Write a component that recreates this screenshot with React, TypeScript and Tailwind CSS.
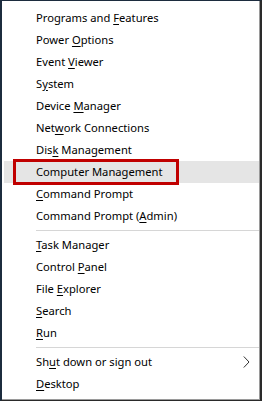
import React from "react";

type Item = { pre: string; key?: string; post?: string; selected?: boolean; arrow?: boolean };

const groups: Item[][] = [
  [
    { pre: "Programs and ", key: "F", post: "eatures" },
    { pre: "Power ", key: "O", post: "ptions" },
    { pre: "Event ", key: "V", post: "iewer" },
    { pre: "S", key: "y", post: "stem" },
    { pre: "Device ", key: "M", post: "anager" },
    { pre: "Net", key: "w", post: "ork Connections" },
    { pre: "Dis", key: "k", post: " Management" },
    { pre: "Computer Management", selected: true },
    { pre: "", key: "C", post: "ommand Prompt" },
    { pre: "Command Prompt (", key: "A", post: "dmin)" },
  ],
  [
    { pre: "", key: "T", post: "ask Manager" },
    { pre: "Control ", key: "P", post: "anel" },
    { pre: "File ", key: "E", post: "xplorer" },
    { pre: "", key: "S", post: "earch" },
    { pre: "", key: "R", post: "un" },
  ],
  [
    { pre: "Sh", key: "u", post: "t down or sign out", arrow: true },
    { pre: "", key: "D", post: "esktop" },
  ],
];

function Row({ item }: { item: Item }) {
  return (
    <div
      className={`relative flex items-center h-[22px] pl-[32px] pr-[9px] ${
        item.selected ? "bg-[#e5e5e5]" : ""
      }`}
    >
      {item.selected && (
        <div className="absolute left-[9px] top-[-2px] w-[166px] h-[26px] border-[3px] border-[#c00000]" />
      )}
      <span className="flex-1 whitespace-nowrap">
        {item.pre}
        {item.key && <span className="underline underline-offset-2">{item.key}</span>}
        {item.post}
      </span>
      {item.arrow && (
        <svg width="7" height="12" viewBox="0 0 7 12">
          <path d="M0.8 0.5 L6 6 L0.8 11.5" fill="none" stroke="#333" strokeWidth="1" />
        </svg>
      )}
    </div>
  );
}

export default function App() {
  return (
    <div
      className="w-[262px] h-[401px] border-l-2 border-t border-r-2 border-b border-l-[#1c2c3e] border-t-[#1c2c3e] border-r-[#2a2a2a] border-b-[#2a2a2a] text-[11.2px] text-black"
      style={{ fontFamily: '"Segoe UI", "Noto Sans", sans-serif' }}
    >
      <div className="h-full bg-white border-r-[1px] border-b-[1px] border-[#9a9a9a] pt-[6px] pl-[2px]">
        {groups.map((g, gi) => (
          <div key={gi}>
            {gi > 0 && (
              <div className="h-[7px] flex items-center pl-[32px]">
                <div className="h-px w-full bg-[#d6d6d6]" />
              </div>
            )}
            {g.map((it, i) => (
              <Row key={i} item={it} />
            ))}
          </div>
        ))}
      </div>
    </div>
  );
}
